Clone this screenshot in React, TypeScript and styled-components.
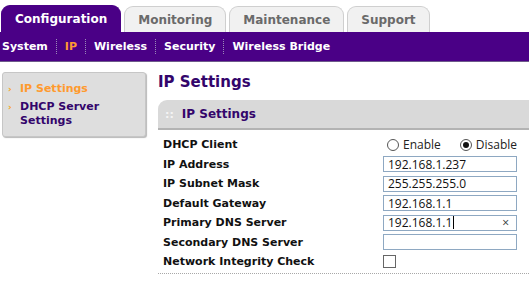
import styled, { createGlobalStyle } from "styled-components";

const GlobalStyle = createGlobalStyle`
  body {
    margin: 0;
    background: #ffffff;
    font-family: Verdana, "DejaVu Sans", sans-serif;
  }
`;

const Page = styled.div`
  width: 529px;
  overflow: hidden;
`;

const TabRow = styled.div`
  display: flex;
  align-items: flex-end;
  gap: 3px;
  padding: 5px 0 0 1px;
  height: 27px;
`;

const Tab = styled.div<{ $active?: boolean }>`
  box-sizing: border-box;
  height: ${(p) => (p.$active ? "27px" : "26px")};
  padding: 0 13px;
  display: flex;
  align-items: center;
  font-size: 12px;
  font-weight: bold;
  border-radius: 9px 9px 0 0;
  color: ${(p) => (p.$active ? "#ffffff" : "#6a6a6a")};
  background: ${(p) => (p.$active ? "#4a0086" : "#f1f1f1")};
  border: 1px solid ${(p) => (p.$active ? "#4a0086" : "#cfcfcf")};
  border-bottom: none;
`;

const SubNav = styled.div`
  height: 29px;
  background: #4a0086;
  border-bottom: 1px solid #6d5a8a;
  display: flex;
  align-items: center;
  padding-left: 2px;
`;

const SubItem = styled.span<{ $active?: boolean; $first?: boolean }>`
  font-size: 11px;
  font-weight: bold;
  color: ${(p) => (p.$active ? "#ff9933" : "#ffffff")};
  padding: 0 8px 0 ${(p) => (p.$first ? "0" : "8px")};
  border-left: ${(p) => (p.$first ? "none" : "1px dotted #9b8ab8")};
  line-height: 15px;
`;

const Body = styled.div`
  display: flex;
  align-items: flex-start;
  padding-top: 10px;
`;

const Sidebar = styled.div`
  box-sizing: border-box;
  width: 144px;
  margin-left: 2px;
  padding: 9px 6px 8px 5px;
  background: #dedede;
  border: 1px solid #c6c6c6;
  border-radius: 3px;
  box-shadow: 1px 1px 1px #b8b8b8;
  display: flex;
  flex-direction: column;
  gap: 4px;
`;

const SideLink = styled.div<{ $active?: boolean }>`
  display: flex;
  gap: 5px;
  font-size: 11px;
  font-weight: bold;
  line-height: 14px;
  color: ${(p) => (p.$active ? "#ff9a2e" : "#33056b")};
`;

const Chevron = styled.span`
  color: #f5a623;
  font-size: 9px;
  width: 7px;
  flex: none;
`;

const Main = styled.div`
  flex: 1;
  margin-left: 12px;
  min-width: 0;
`;

const Heading = styled.h1`
  margin: 0;
  font-size: 15px;
  font-weight: bold;
  color: #33056b;
  line-height: 21px;
  height: 28px;
`;

const SectionHead = styled.div`
  height: 28px;
  background: #d9d9d9;
  border-bottom: 2px solid #b3b3b3;
  border-top-left-radius: 9px;
  display: flex;
  align-items: center;
  padding-left: 7px;
  gap: 8px;
  font-size: 12px;
  font-weight: bold;
  color: #33056b;
`;

const Dots = styled.span`
  color: #f4f4f4;
  font-size: 11px;
`;

const Form = styled.div`
  display: grid;
  grid-template-columns: 220px 134px;
  grid-auto-rows: 19.5px;
  align-items: center;
  padding: 5px 0 1px 5px;
  border-bottom: 1px dotted #a8a8a8;
`;

const Label = styled.div`
  font-size: 11px;
  font-weight: bold;
  color: #111111;
`;

const RadioGroup = styled.div`
  display: flex;
  align-items: center;
  padding-left: 4px;
  font-family: "Open Sans", "Noto Sans", sans-serif;
  font-size: 12px;
  color: #222222;
`;

const RadioOption = styled.label`
  display: flex;
  align-items: center;
  gap: 4px;
  margin-right: 19px;
`;

const RadioDot = styled.span<{ $checked?: boolean }>`
  box-sizing: border-box;
  width: 12px;
  height: 12px;
  border-radius: 50%;
  border: 1px solid #555555;
  background: #ffffff;
  display: flex;
  align-items: center;
  justify-content: center;
  &::after {
    content: "";
    width: 6px;
    height: 6px;
    border-radius: 50%;
    background: ${(p) => (p.$checked ? "#111111" : "transparent")};
  }
`;

const Field = styled.div`
  box-sizing: border-box;
  height: 16px;
  border: 1px solid #8ea8c2;
  background: #ffffff;
  display: flex;
  align-items: center;
  padding: 0 7px 0 4px;
  font-family: "Open Sans", "Noto Sans", sans-serif;
  font-size: 12px;
  color: #111111;
`;

const Caret = styled.span`
  width: 1px;
  height: 13px;
  background: #000000;
  margin-left: 1px;
`;

const ClearX = styled.span`
  margin-left: auto;
  font-size: 12px;
  color: #333333;
`;

const CheckBox = styled.span`
  box-sizing: border-box;
  width: 13px;
  height: 13px;
  border: 1px solid #666666;
  background: #ffffff;
  display: block;
`;

const subNav = ["System", "IP", "Wireless", "Security", "Wireless Bridge"];
const tabs = ["Configuration", "Monitoring", "Maintenance", "Support"];

const fields: { label: string; value: string; focused?: boolean }[] = [
  { label: "IP Address", value: "192.168.1.237" },
  { label: "IP Subnet Mask", value: "255.255.255.0" },
  { label: "Default Gateway", value: "192.168.1.1" },
  { label: "Primary DNS Server", value: "192.168.1.1", focused: true },
  { label: "Secondary DNS Server", value: "" },
];

export default function App() {
  return (
    <Page>
      <GlobalStyle />
      <TabRow>
        {tabs.map((t, i) => (
          <Tab key={t} $active={i === 0}>
            {t}
          </Tab>
        ))}
      </TabRow>
      <SubNav>
        {subNav.map((s, i) => (
          <SubItem key={s} $first={i === 0} $active={s === "IP"}>
            {s}
          </SubItem>
        ))}
      </SubNav>
      <Body>
        <Sidebar>
          <SideLink $active>
            <Chevron>›</Chevron>
            <span>IP Settings</span>
          </SideLink>
          <SideLink>
            <Chevron>›</Chevron>
            <span>
              DHCP Server
              <br />
              Settings
            </span>
          </SideLink>
        </Sidebar>
        <Main>
          <Heading>IP Settings</Heading>
          <SectionHead>
            <Dots>::</Dots>
            <span>IP Settings</span>
          </SectionHead>
          <Form>
            <Label>DHCP Client</Label>
            <RadioGroup>
              <RadioOption>
                <RadioDot />
                Enable
              </RadioOption>
              <RadioOption>
                <RadioDot $checked />
                Disable
              </RadioOption>
            </RadioGroup>
            {fields.map((f) => (
              <>
                <Label key={f.label + "l"}>{f.label}</Label>
                <Field key={f.label + "f"}>
                  {f.value}
                  {f.focused && <Caret />}
                  {f.focused && <ClearX>×</ClearX>}
                </Field>
              </>
            ))}
            <Label>Network Integrity Check</Label>
            <CheckBox />
          </Form>
        </Main>
      </Body>
    </Page>
  );
}
